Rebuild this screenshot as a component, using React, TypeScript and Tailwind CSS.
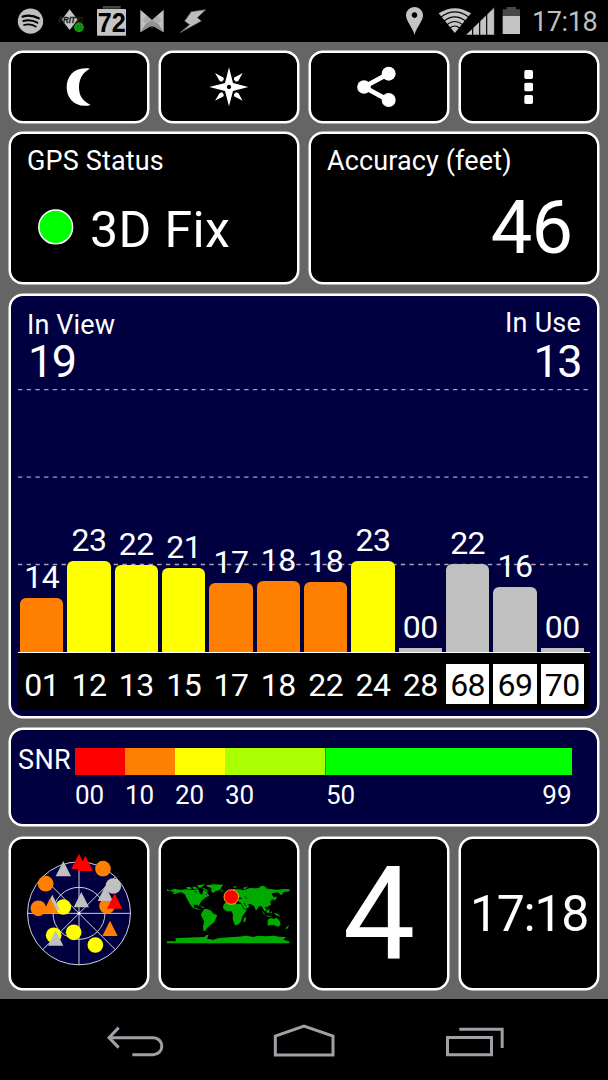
import type { ReactNode } from "react";

type Satellite = { id: string; snr: string; height: number; color: string; glonass?: boolean };

const ORANGE = "bg-[#ff8000]";
const YELLOW = "bg-[#ffff00]";
const GRAY = "bg-[#c0c0c0]";

const satellites: Satellite[] = [
  { id: "01", snr: "14", height: 54, color: ORANGE },
  { id: "12", snr: "23", height: 91, color: YELLOW },
  { id: "13", snr: "22", height: 86.7, color: YELLOW },
  { id: "15", snr: "21", height: 84, color: YELLOW },
  { id: "17", snr: "17", height: 69, color: ORANGE },
  { id: "18", snr: "18", height: 71.5, color: ORANGE },
  { id: "22", snr: "18", height: 70, color: ORANGE },
  { id: "24", snr: "23", height: 91, color: YELLOW },
  { id: "28", snr: "00", height: 4, color: GRAY },
  { id: "68", snr: "22", height: 88.5, color: GRAY, glonass: true },
  { id: "69", snr: "16", height: 65, color: GRAY, glonass: true },
  { id: "70", snr: "00", height: 4, color: GRAY, glonass: true },
];

function Card({ className = "", children }: { className?: string; children: ReactNode }) {
  return (
    <div className={`overflow-hidden rounded-[14px] border-2 border-white shadow-[0_0_0_0.5px_#ffffff] ${className}`}>
      {children}
    </div>
  );
}

function StatusBar() {
  return (
    <header className="flex h-[42px] items-start bg-black pt-[5px] pl-[17px] text-[#bfbfbf]">
      <svg className="h-[31px] w-[27px]" viewBox="51 15 81 93">
        <circle cx="91.5" cy="63.5" r="38" fill="#bfbfbf" />
        <g fill="none" stroke="#000" strokeLinecap="round">
          <path d="M68 50 Q93 42 116 55" strokeWidth="7" />
          <path d="M70 63 Q92 57 112 68" strokeWidth="6" />
          <path d="M72 75 Q91 70 108 80" strokeWidth="5" />
        </g>
      </svg>
      <svg className="ml-[10px] h-[31px] w-[34px]" viewBox="162 15 102 93">
        <path d="M209 28 L233 59 L209 90 L185 59 Z" fill="#c4c4c4" />
        <text x="212" y="69" textAnchor="middle" fontFamily="Liberation Sans, sans-serif" fontWeight="700" fontStyle="italic" fontSize="25" textLength="74" lengthAdjust="spacingAndGlyphs" fill="#111" stroke="#333" strokeWidth="1">FRITZ!</text>
        <circle cx="237" cy="82" r="14.5" fill="#10a510" />
        <path d="M224 79 H250 M224 86 H250 M233 69 V95 M241 69 V95" stroke="#0a650a" strokeWidth="1.5" />
      </svg>
      <svg className="ml-[7px] h-[35px] w-[33px]" viewBox="285 15 99 105">
        <rect x="308" y="18" width="54" height="8" fill="#454545" />
        <rect x="291" y="27" width="87" height="80" rx="2" fill="#c4c4c4" />
        <text x="335" y="95" textAnchor="middle" fontFamily="Liberation Sans, sans-serif" fontWeight="700" fontSize="83" textLength="84" lengthAdjust="spacingAndGlyphs" fill="#000">72</text>
      </svg>
      <svg className="ml-[11px] h-[31px] w-[26px]" viewBox="417 15 78 93">
        <path d="M421 29 L456 60 L491 29 V97 L456 76 L421 97 Z" fill="#c0c0c0" />
        <path d="M421 97 L437 72 L456 60 L475 72 L491 97 L456 76 Z" fill="#8c8c8c" />
        <path d="M438 44 L456 60 L474 44 L484 62 L456 84 L428 62 Z" fill="#9c9c9c" fillOpacity="0.5" />
      </svg>
      <svg className="ml-[14px] h-[31px] w-[28px]" viewBox="537 15 84 93">
        <path d="M574 35 L617 29 L592 53 L604 63 L540 98 L569 74 L554 63 Z" fill="#bcbcbc" stroke="#666" strokeWidth="2" />
      </svg>
      <svg className="ml-[198px] h-[31px] w-[19px]" viewBox="303 15 57 93">
        <path fillRule="evenodd" d="M331.500 21 C317 21 306 32 306 46 C306 64 326 82 331.500 105 C337 82 357 64 357 46 C357 32 346 21 331.500 21 Z M331.500 37 A8.500 8.500 0 1 1 331.400 37 Z" fill="#c4c4c4" />
      </svg>
      <svg className="ml-[14px] h-[31px] w-[57px]" viewBox="402 15 171 93">
        <path d="M404 40 Q452 9 501 40 L452.500 99 Z" fill="#c4c4c4" />
        <g fill="none" stroke="#000" strokeWidth="3.500">
          <path d="M411 51 Q452 20 494 51" />
          <path d="M420 63 Q452 38 485 63" />
          <path d="M429 74 Q452 55 476 74" />
          <path d="M438 84 Q452 72 467 84" />
        </g>
        <path d="M485 105 L571 22 V105 Z" fill="#c4c4c4" stroke="#000" strokeWidth="1.500" />
        <path d="M506 80 V106 M527 60 V106 M548 40 V106" stroke="#000" strokeWidth="3.500" />
      </svg>
      <svg className="ml-[7px] h-[31px] w-[19px]" viewBox="594 15 57 93">
        <path d="M596 48 V28 H608 V21 H636 V28 H648 V48 Z" fill="#484848" />
        <rect x="596" y="48" width="52" height="54" fill="#c4c4c4" />
      </svg>
      <span className="mt-[4px] ml-[11px] text-[27px] leading-none tracking-[-0.400px]">17:18</span>
    </header>
  );
}

function Toolbar() {
  return (
    <div className="grid h-[72px] grid-cols-4 gap-[10px]">
      <Card className="bg-black">
        <svg className="size-full" viewBox="33 159 408 204">
          <path d="M270 206 C226 198 200 226 200 262 C200 300 231 326 272 315 C246 303 237 285 237 262 C237 237 248 217 270 206 Z" fill="#fff" />
        </svg>
      </Card>
      <Card className="bg-black">
        <svg className="size-full" viewBox="483 159 408 204">
          <path fillRule="evenodd" d="M687 202 L699 249 L745 261 L699 273 L687 319 L675 273 L628 261 L675 249 Z M687 254.500 A6.500 6.500 0 1 0 687.100 254.500 Z" fill="#fff" />
          <path d="M645 219 L671 233 L671 239 L666 245 L659 243 Z M728 219 L702 233 L702 239 L708 245 L715 243 Z M645 302 L671 289 L671 283 L666 277 L659 279 Z M728 302 L702 289 L702 283 L708 277 L715 279 Z" fill="#fff" />
        </svg>
      </Card>
      <Card className="bg-black">
        <svg className="size-full" viewBox="21 159 408 204">
          <path d="M254 221 L180 261 L254 301" fill="none" stroke="#fff" strokeWidth="14" />
          <g fill="#fff">
            <circle cx="180" cy="261" r="20.500" />
            <circle cx="254" cy="221" r="21" />
            <circle cx="254" cy="300" r="21" />
          </g>
        </svg>
      </Card>
      <Card className="bg-black">
        <svg className="size-full" viewBox="471 159 408 204" fill="#fff">
          <rect x="661" y="210" width="26" height="27" rx="5" />
          <rect x="661" y="248" width="26" height="26" rx="5" />
          <rect x="661" y="285" width="26" height="27" rx="5" />
        </svg>
      </Card>
    </div>
  );
}

function SignalChart() {
  return (
    <Card className="flex h-[424px] flex-col bg-[#000040] px-[7px] pt-[16px]">
      <div className="flex h-[77px] justify-between px-[9px]">
        <div className="flex flex-col">
          <span className="text-[27px] leading-none tracking-[0.100px]">In View</span>
          <span className="ml-[1px] text-[45px] leading-none tracking-[-1.500px]">19</span>
        </div>
        <div className="-mt-[2px] flex flex-col items-end">
          <span className="text-[27px] leading-none tracking-[0.200px]">In Use</span>
          <span className="mt-[2px] text-[45px] leading-none tracking-[-1.500px]">13</span>
        </div>
      </div>
      <div className="relative flex h-[264px] items-end gap-[4px] border-b border-white pl-[2px]">
        <svg className="absolute inset-x-0 top-0 h-full w-full" stroke="#a4a4bd" strokeWidth="1.300" strokeDasharray="4.350 4.350">
          <path d="M0 0.700 H572" />
          <path d="M0 88.200 H572" />
          <path d="M0 175.500 H572" />
        </svg>
        {satellites.map((s) => (
          <div key={s.id} className="relative flex w-[43.330px] shrink-0 flex-col items-center">
            <span className="mb-[5px] text-[32px] leading-none tracking-[-0.500px]">{s.snr}</span>
            <div className={`w-full ${s.height > 5 ? "rounded-t-[6px]" : ""} ${s.color}`} style={{ height: s.height }} />
          </div>
        ))}
      </div>
      <div className="flex h-[57px] gap-[4px] bg-black pt-[11px] pl-[2px]">
        {satellites.map((s) => (
          <div
            key={s.id}
            className={`flex h-[40px] w-[43.330px] shrink-0 justify-center pt-[5px] text-[32px] leading-none tracking-[-0.500px] ${s.glonass ? "bg-white text-black" : ""}`}
          >
            {s.id}
          </div>
        ))}
      </div>
    </Card>
  );
}

function SnrLegend() {
  return (
    <Card className="flex h-[98px] bg-[#000040] pt-[18px] pl-[7px] text-[26px] leading-none">
      <span className="-mt-[1px] w-[57px] text-[27px] tracking-[0.400px]">SNR</span>
      <div className="w-[496.500px]">
        <div className="flex h-[27px]">
          <div className="w-[50px] bg-[#ff0000]" />
          <div className="w-[50.300px] bg-[#ff8000]" />
          <div className="w-[50px] bg-[#ffff00]" />
          <div className="w-[100px] bg-[#aaff00]" />
          <div className="flex-1 border-l border-[#20a000] bg-[#00ff00]" />
        </div>
        <div className="mt-[7px] flex">
          <span className="w-[50px]">00</span>
          <span className="w-[50px]">10</span>
          <span className="w-[50px]">20</span>
          <span className="w-[101px]">30</span>
          <span className="flex-1">50</span>
          <span>99</span>
        </div>
      </div>
    </Card>
  );
}

function SkyPlot() {
  const triangle = (x: number, y: number, fill: string) => (
    <path d={`M${x} ${y - 23} L${x + 23} ${y + 23} H${x - 23} Z`} fill={fill} />
  );
  return (
    <svg className="size-full" viewBox="33 27 408 447">
      <circle cx="237" cy="250" r="154.500" fill="#000040" />
      <g fill="none" stroke="#d0d0dc" strokeWidth="3">
        <circle cx="237" cy="250" r="154.500" />
        <circle cx="237" cy="250" r="78" />
        <path d="M82 250 H392 M237 95 V405 M128 141 L346 359 M346 141 L128 359" />
      </g>
      <circle cx="237" cy="250" r="4" fill="#fff" />
      {triangle(190, 116, "#c0c0c0")}
      {triangle(237, 94, "#ff0000")}
      {triangle(256, 100, "#ff0000")}
      <circle cx="309" cy="116" r="23.500" fill="#ff8000" />
      <circle cx="137" cy="161" r="23.500" fill="#ff8000" />
      <circle cx="115" cy="235" r="23.500" fill="#ff8000" />
      <circle cx="190" cy="231" r="23.500" fill="#ffff00" />
      {triangle(157, 217, "#c0c0c0")}
      {triangle(151, 227, "#ff8000")}
      <circle cx="321" cy="228" r="23.500" fill="#ff8000" />
      <circle cx="340" cy="168" r="23.500" fill="#c0c0c0" />
      {triangle(316, 190, "#c0c0c0")}
      {triangle(344, 213, "#ff0000")}
      {triangle(244, 209, "#c0c0c0")}
      {triangle(330, 295, "#ff8000")}
      <circle cx="161" cy="316" r="23.500" fill="#ffff00" />
      {triangle(167, 324, "#c0c0c0")}
      <circle cx="221" cy="307" r="23.500" fill="#ffff00" />
      <circle cx="286" cy="345" r="23.500" fill="#ffff00" />
    </svg>
  );
}

function WorldMap() {
  return (
    <svg className="size-full" viewBox="27 27 408 447">
      <g fill="#00aa00">
        <path d="M45 176 L52 182 L66 177 L86 179 L104 178 L124 180 L139 178 L143 190 L150 196 L154 180 L164 185 L172 198 L162 202 L151 211 L144 220 L140 229 L136 224 L124 224 L127 233 L135 235 L141 238 L151 243 L141 239 L130 237 L120 231 L112 219 L104 205 L98 192 L86 186 L71 191 L61 191 L66 186 L58 184 L45 183 Z" />
        <path d="M102 172 L114 170 L120 176 L107 178 Z M121 170 L132 170 L137 176 L124 177 Z M134 166 L147 164 L160 163 L153 169 L143 175 Z M148 172 L161 177 L168 184 L159 182 Z M142 226 L153 230 L160 233 L151 233 Z" />
        <path d="M162 166 L184 163 L214 164 L207 174 L204 180 L192 183 L184 189 L178 185 L178 174 L169 171 Z" />
        <path d="M157 237 L166 237 L178 242 L183 250 L196 256 L191 266 L187 276 L176 285 L167 292 L160 303 L154 302 L153 288 L157 274 L151 265 L147 254 L151 245 Z" />
        <path d="M218 220 L227 217 L241 216 L255 221 L267 222 L275 237 L285 239 L278 250 L270 260 L269 269 L264 279 L255 286 L248 284 L242 266 L243 254 L239 244 L224 244 L214 236 L213 228 Z" />
        <path d="M276 264 L283 262 L280 275 L274 276 Z M206 181 L214 180 L210 185 Z M243 170 L255 168 L248 175 Z" />
        <path d="M219 207 L225 202 L224 192 L235 185 L245 177 L261 178 L275 181 L294 174 L314 175 L330 171 L351 177 L376 179 L397 177 L413 178 V184 L395 186 L389 196 L377 187 L359 190 L362 198 L373 207 L361 208 L354 214 L357 224 L347 230 L339 231 L344 242 L337 243 L329 229 L321 229 L312 242 L306 228 L295 222 L288 223 L292 230 L281 237 L276 235 L267 220 L261 216 L258 210 L270 204 L258 202 L251 209 L242 209 L235 204 L226 213 L219 213 Z" />
        <path d="M320 171 L334 167 L344 173 L332 177 Z M273 173 L290 169 L283 174 L278 179 Z M359 211 L367 207 L370 199 L375 202 L369 211 Z M329 240 L336 249 L340 256 L353 258 L361 260 L348 260 L335 253 Z M343 243 L352 236 L352 249 L344 248 Z M357 243 L361 248 L355 250 Z M365 248 L379 252 L385 260 L371 255 Z" />
        <path d="M347 269 L356 264 L366 266 L374 263 L383 273 L386 283 L379 291 L366 285 L356 285 L347 288 Z M400 294 L408 288 L411 284 L408 294 L402 298 Z" />
        <path d="M45 334 L72 334 L70 325 L99 323 L133 322 L158 321 L162 316 L170 314 L165 326 L185 329 L198 325 L230 322 L258 320 L285 317 L304 321 L318 317 L341 319 L363 317 L383 320 L402 321 L394 329 L411 334 L413 340 H45 Z" />
      </g>
      <g stroke="#000" strokeWidth="2">
        <path d="M259 206 L269 205 M278 199 L285 207 M276 218 L281 228 M126 184 L135 187 M162 192 L165 195" />
      </g>
      <circle cx="238" cy="201" r="22" fill="#ff0000" stroke="#ffd020" strokeWidth="2.500" />
    </svg>
  );
}

function NavBar() {
  return (
    <footer className="flex h-[81px] bg-black pt-[23px] pl-[106px]">
      <svg className="h-[36px] w-[58px]" viewBox="48 66 174 108" fill="none" stroke="#a0a0a7" strokeWidth="9">
        <path d="M60 113 H190 A25.500 25.500 0 0 1 190 164 H127" />
        <path d="M86 83 L57 113 L86 143" />
      </svg>
      <svg className="ml-[108px] h-[36px] w-[64px]" viewBox="546 66 192 108" fill="none" stroke="#a0a0a7" strokeWidth="9">
        <path d="M556 165 V108 L642 78 L729 108 V165 Z" />
      </svg>
      <svg className="ml-[109px] h-[36px] w-[60px]" viewBox="423 576 180 108" fill="none" stroke="#a0a0a7" strokeWidth="9">
        <path d="M430.500 622.500 H562.500 V674.500 H430.500 Z M466 598 H594.500 V654" />
      </svg>
    </footer>
  );
}

export default function App() {
  return (
    <div className="flex h-[1080px] w-[608px] flex-col overflow-hidden bg-[#656565] font-['Roboto',sans-serif] text-white">
      <StatusBar />
      <main className="flex h-[957px] flex-col px-[9px] pt-[9px]">
        <Toolbar />
        <div className="mt-[9px] grid h-[152px] grid-cols-2 gap-[10px]">
          <Card className="bg-black pt-[14px] pl-[16px]">
            <div className="text-[27px] leading-none tracking-[0.150px]">GPS Status</div>
            <div className="mt-[29px] flex items-start pl-[11px]">
              <svg className="mt-[5px] size-[36px]" viewBox="0 0 36 36">
                <circle cx="17.700" cy="17.900" r="16.900" fill="#00ff00" stroke="#fff" strokeWidth="1.500" />
              </svg>
              <span className="mt-[1px] ml-[16px] text-[50px] leading-none tracking-[0.400px]">3D Fix</span>
            </div>
          </Card>
          <Card className="flex flex-col bg-black pt-[14px] pr-[25px] pl-[16px]">
            <span className="text-[27px] leading-none tracking-[0.120px]">Accuracy (feet)</span>
            <span className="mt-[16px] self-end text-[74px] leading-none tracking-[-1px]">46</span>
          </Card>
        </div>
        <div className="mt-[10px]">
          <SignalChart />
        </div>
        <div className="mt-[10px]">
          <SnrLegend />
        </div>
        <div className="mt-[11px] grid h-[153px] grid-cols-4 gap-[10px]">
          <Card className="bg-black">
            <SkyPlot />
          </Card>
          <Card className="bg-black">
            <WorldMap />
          </Card>
          <Card className="flex justify-center bg-black pt-[10px] text-[129px] leading-none">4</Card>
          <Card className="flex justify-center bg-black pt-[50px] text-[50px] leading-none tracking-[-1.300px]">17:18</Card>
        </div>
      </main>
      <NavBar />
    </div>
  );
}
